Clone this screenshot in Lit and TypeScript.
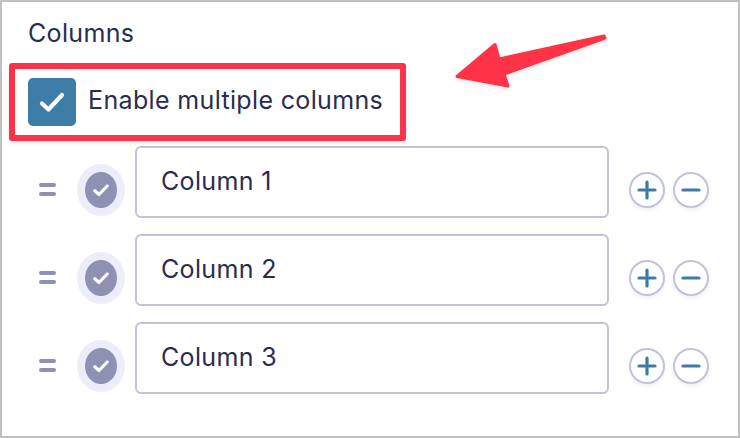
import { LitElement, html, css } from "lit";
import { customElement } from "lit/decorators.js";

const rows = ["Column 1", "Column 2", "Column 3"];

@customElement("app-root")
export class AppRoot extends LitElement {
  static styles = css`
    :host {
      display: block;
      position: relative;
      box-sizing: border-box;
      width: 740px;
      height: 438px;
      background: #fff;
      border: 2px solid #c0c0c0;
      font-family: Inter, "Liberation Sans", sans-serif;
      font-size: 25px;
      letter-spacing: 0.35px;
      color: #2a2c52;
      overflow: hidden;
    }
    .title {
      margin: 16px 0 0 26px;
      line-height: 30px;
    }
    .highlight {
      box-sizing: border-box;
      display: flex;
      align-items: center;
      gap: 12px;
      width: 397px;
      height: 78px;
      margin: 15px 0 0 7px;
      padding-left: 13px;
      padding-bottom: 4px;
      border: 6px solid #ff3347;
      border-radius: 3px;
      box-shadow: 0 2px 4px rgba(0, 0, 0, 0.08);
    }
    .check {
      width: 48px;
      height: 48px;
      margin-top: 4px;
      border-radius: 5px;
      background: #3e7ca8;
      display: flex;
      align-items: center;
      justify-content: center;
    }
    .rows {
      display: flex;
      flex-direction: column;
      gap: 16px;
      margin: 5px 0 0 37px;
    }
    .row {
      display: flex;
      align-items: center;
      height: 72px;
    }
    .handle {
      width: 17px;
      display: flex;
      flex-direction: column;
      gap: 5px;
      margin: 15px 21px 0 0;
    }
    .handle span {
      height: 4px;
      border-radius: 2px;
      background: #8f91b3;
    }
    .status {
      width: 48px;
      height: 52px;
      margin-top: 16px;
      margin-right: 10px;
      border-radius: 50%;
      background: #ecedf8;
      display: flex;
      align-items: center;
      justify-content: center;
    }
    .status div {
      width: 32px;
      height: 36px;
      border-radius: 50%;
      background: #8f91b3;
      display: flex;
      align-items: center;
      justify-content: center;
    }
    .field {
      box-sizing: border-box;
      width: 474px;
      height: 72px;
      border: 2px solid #c1c3dc;
      border-radius: 6px;
      padding: 0 0 3px 24px;
      display: flex;
      align-items: center;
    }
    .btns {
      display: flex;
      gap: 8px;
      margin-left: 20px;
      margin-top: 16px;
    }
    .btn {
      box-sizing: border-box;
      width: 36px;
      height: 36px;
      border: 2px solid #c1c3dc;
      border-radius: 50%;
      background: #fff;
      box-shadow: 0 2px 4px rgba(36, 39, 72, 0.08);
      display: flex;
      align-items: center;
      justify-content: center;
    }
    .arrow {
      position: absolute;
      left: 446px;
      top: 25px;
      filter: drop-shadow(0 2px 2px rgba(0, 0, 0, 0.1));
    }
  `;

  render() {
    return html`
      <div class="title">Columns</div>
      <div class="highlight">
        <div class="check">
          <svg width="26" height="22" viewBox="0 0 26 22">
            <path d="M3 12.5 L9.5 18.5 L23 4" fill="none" stroke="#fff" stroke-width="4.2" stroke-linecap="round" stroke-linejoin="round" />
          </svg>
        </div>
        Enable multiple columns
      </div>
      <div class="rows">
        ${rows.map(
          (name) => html`
            <div class="row">
              <div class="handle"><span></span><span></span></div>
              <div class="status">
                <div>
                  <svg width="16" height="14" viewBox="0 0 16 14">
                    <path d="M1.8 7.8 L6 11.5 L14.2 3" fill="none" stroke="#fff" stroke-width="3.2" stroke-linecap="round" stroke-linejoin="round" />
                  </svg>
                </div>
              </div>
              <div class="field">${name}</div>
              <div class="btns">
                <div class="btn">
                  <svg width="20" height="20" viewBox="0 0 20 20">
                    <path d="M2 10 H18 M10 2 V18" stroke="#3e7ca8" stroke-width="3.2" stroke-linecap="round" />
                  </svg>
                </div>
                <div class="btn">
                  <svg width="20" height="20" viewBox="0 0 20 20">
                    <path d="M2 10 H18" stroke="#3e7ca8" stroke-width="3.2" stroke-linecap="round" />
                  </svg>
                </div>
              </div>
            </div>
          `
        )}
      </div>
      <svg class="arrow" width="170" height="70" viewBox="0 0 170 70">
        <path d="M9 49.5 L47 17.5 L51 32 L156 9 L157 11 L56 47 L60 59 Z" fill="#ff3347" stroke="#ff3347" stroke-width="3" stroke-linejoin="round" />
      </svg>
    `;
  }
}
